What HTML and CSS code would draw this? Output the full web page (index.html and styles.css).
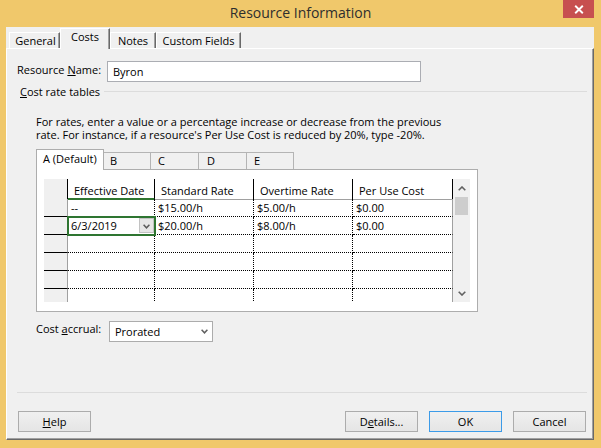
FILE: index.html
```html
<!DOCTYPE html>
<html>
<head>
<meta charset="utf-8">
<title>Resource Information</title>
<link rel="stylesheet" href="styles.css">
</head>
<body>
<div class="window">
  <div class="titlebar">
    <div class="tb-spacer"></div>
    <div class="title">Resource Information</div>
    <div class="caption-btns">
      <div class="close-btn"><svg width="10" height="9" viewBox="0 0 10 9"><path d="M1.2 0.8 L8.8 8.2 M8.8 0.8 L1.2 8.2" stroke="#fff" stroke-width="1.9" fill="none"/></svg></div>
    </div>
  </div>
  <div class="client">
    <div class="tabstrip">
      <div class="tab tab-general">General</div>
      <div class="tab tab-costs active">Costs</div>
      <div class="tab tab-notes">Notes</div>
      <div class="tab tab-custom">Custom Fields</div>
    </div>
    <div class="page">
      <div class="name-row">
        <div class="name-lbl">Resource <u>N</u>ame:</div>
        <div class="textbox">Byron</div>
      </div>
      <div class="group-head">
        <span class="group-lbl"><u>C</u>ost rate tables</span>
        <div class="group-rule"></div>
      </div>
      <div class="desc">
        <div class="desc-line">For rates, enter a value or a percentage increase or decrease from the previous</div>
        <div class="desc-line">rate. For instance, if a resource's Per Use Cost is reduced by 20%, type -20%.</div>
      </div>
      <div class="rtabs">
        <div class="rtab rtab-a active">A (Default)</div>
        <div class="rtab rtab-b">B</div>
        <div class="rtab rtab-c">C</div>
        <div class="rtab rtab-d">D</div>
        <div class="rtab rtab-e">E</div>
      </div>
      <div class="rpanel">
        <div class="grid">
          <div class="sheet">
            <div class="row head">
              <div class="hc corner"></div>
              <div class="hc sel-col">Effective Date</div>
              <div class="hc">Standard Rate</div>
              <div class="hc">Overtime Rate</div>
              <div class="hc">Per Use Cost</div>
            </div>
            <div class="row">
              <div class="rh"></div>
              <div class="dc">--</div>
              <div class="dc">$15.00/h</div>
              <div class="dc">$5.00/h</div>
              <div class="dc last">$0.00</div>
            </div>
            <div class="row">
              <div class="rh"></div>
              <div class="dc active-cell"><span>6/3/2019</span><span class="cell-drop"><svg width="7" height="5" viewBox="0 0 7 5"><polyline points="0.6,0.8 3.5,3.8 6.4,0.8" fill="none" stroke="#5a5a5a" stroke-width="1.5"/></svg></span></div>
              <div class="dc">$20.00/h</div>
              <div class="dc">$8.00/h</div>
              <div class="dc last">$0.00</div>
            </div>
            <div class="row">
              <div class="rh"></div><div class="dc"></div><div class="dc"></div><div class="dc"></div><div class="dc last"></div>
            </div>
            <div class="row">
              <div class="rh"></div><div class="dc"></div><div class="dc"></div><div class="dc"></div><div class="dc last"></div>
            </div>
            <div class="row">
              <div class="rh"></div><div class="dc"></div><div class="dc"></div><div class="dc"></div><div class="dc last"></div>
            </div>
            <div class="row">
              <div class="rh"></div><div class="dc"></div><div class="dc"></div><div class="dc"></div><div class="dc last"></div>
            </div>
          </div>
          <div class="vscroll">
            <div class="sb-btn sb-up"><svg width="8" height="5" viewBox="0 0 8 5"><polyline points="0.7,4.2 4,1 7.3,4.2" fill="none" stroke="#606060" stroke-width="1.6"/></svg></div>
            <div class="sb-thumb"></div>
            <div class="sb-track"></div>
            <div class="sb-btn"><svg width="8" height="5" viewBox="0 0 8 5"><polyline points="0.7,0.8 4,4 7.3,0.8" fill="none" stroke="#606060" stroke-width="1.6"/></svg></div>
          </div>
        </div>
      </div>
      <div class="accrual-row">
        <div class="accrual-lbl">Cost <u>a</u>ccrual:</div>
        <div class="select"><span>Prorated</span><svg width="7" height="5" viewBox="0 0 7 5"><polyline points="0.6,0.8 3.5,3.8 6.4,0.8" fill="none" stroke="#606060" stroke-width="1.5"/></svg></div>
      </div>
      <div class="footer-sep"></div>
      <div class="footer">
        <div class="btn"><u>H</u>elp</div>
        <div class="footer-right">
          <div class="btn">D<u>e</u>tails...</div>
          <div class="btn default">OK</div>
          <div class="btn">Cancel</div>
        </div>
      </div>
    </div>
  </div>
</div>
</body>
</html>
```
FILE: styles.css
```css
html, body {
  margin: 0;
  padding: 0;
}
body {
  font-family: "Segoe UI", "Open Sans", "Noto Sans", sans-serif;
  font-size: 11px;
  color: #000;
  background: #f0c86b;
}
u { text-decoration: underline; text-underline-offset: 1px; }

.window {
  width: 601px;
  height: 448px;
  background: #f0c86b;
  display: flex;
  flex-direction: column;
}

/* title bar */
.titlebar {
  height: 27px;
  display: grid;
  grid-template-columns: 1fr auto 1fr;
  align-items: start;
}
.title {
  font-size: 14px;
  line-height: 26px;
  color: #2e2e2e;
}
.caption-btns {
  display: flex;
  justify-content: flex-end;
  padding-right: 7px;
}
.close-btn {
  width: 31px;
  height: 18px;
  background: #c75050;
  display: flex;
  align-items: center;
  justify-content: center;
}

/* client */
.client {
  flex: 1;
  margin: 0 7px 8px 6px;
  background: #f0f0f0;
  display: flex;
  flex-direction: column;
  min-height: 0;
}
.tabstrip {
  height: 21px;
  display: flex;
  align-items: flex-end;
  padding-left: 3px;
}
.tab {
  box-sizing: border-box;
  height: 16px;
  border-top: 1px solid #fff;
  border-left: 1px solid #fff;
  border-right: 1px solid #696969;
  box-shadow: inset -1px 0 0 #a0a0a0;
  line-height: 15px;
  text-align: center;
  background: #f0f0f0;
  white-space: nowrap;
}
.tab.active {
  height: 21px;
  margin-bottom: -1px;
  padding-bottom: 3px;
  line-height: 16px;
  position: relative;
  z-index: 1;
}
.tab-general { width: 51px; padding-left: 2px; }
.tab-costs { width: 50px; }
.tab-notes { width: 46px; }
.tab-custom { width: 85px; }

.page {
  flex: 1;
  box-sizing: border-box;
  border-top: 1px solid #fff;
  border-left: 1px solid #fff;
  border-right: 1px solid #696969;
  border-bottom: 1px solid #696969;
  box-shadow: inset -1px -1px 0 #a0a0a0;
  padding: 12px 6px 7px 10px;
  display: flex;
  flex-direction: column;
}

.name-row {
  display: flex;
  align-items: flex-start;
  height: 21px;
}
.name-lbl {
  width: 90px;
  line-height: 17px;
  white-space: nowrap;
}
.textbox {
  box-sizing: border-box;
  width: 314px;
  height: 21px;
  border: 1px solid #abadb3;
  background: #fff;
  padding-left: 5px;
  line-height: 19px;
}

.group-head {
  display: flex;
  align-items: center;
  height: 16px;
  margin-top: 2px;
  padding-left: 3px;
}
.group-lbl { line-height: 16px; white-space: nowrap; }
.group-rule {
  flex: 1;
  height: 1px;
  background: #dcdcdc;
  margin-left: 4px;
  margin-bottom: 1px;
}

.desc {
  margin: 16px 0 0 19px;
  display: flex;
  flex-direction: column;
}
.desc-line {
  height: 12.5px;
  line-height: 12.5px;
  white-space: nowrap;
}

.rtabs {
  margin: 8px 0 0 19px;
  height: 20px;
  display: flex;
  align-items: flex-end;
}
.rtab {
  box-sizing: border-box;
  height: 17px;
  border: 1px solid #b4b4b4;
  border-bottom: 0;
  background: #f0f0f0;
  line-height: 16px;
  padding-left: 6px;
  margin-left: -1px;
  white-space: nowrap;
}
.rtab.active {
  height: 21px;
  margin-bottom: -1px;
  margin-left: 0;
  background: #fff;
  border-color: #adadad;
  line-height: 18px;
  padding-bottom: 2px;
  position: relative;
  z-index: 1;
}
.rtab-a { width: 68px; }
.rtab-b { width: 48px; }
.rtab-c { width: 49px; padding-left: 7px; }
.rtab-d { width: 49px; padding-left: 8px; }
.rtab-e { width: 48px; padding-left: 7px; }

.rpanel {
  box-sizing: border-box;
  width: 442px;
  height: 143px;
  margin-left: 19px;
  border: 1px solid #adadad;
  background: #fff;
  padding: 9px 7px 9px 7px;
}
.grid {
  display: flex;
  height: 123px;
  overflow: hidden;
}
.sheet {
  width: 409px;
  overflow: hidden;
}
.row {
  display: grid;
  grid-template-columns: 24px 87px 99px 99px 100px;
  height: 18px;
}
.row.head { height: 20px; }
.row > div { box-sizing: border-box; white-space: nowrap; overflow: visible; }

.hc {
  background: #fff;
  border-right: 1px solid #000;
  border-bottom: 1px solid #a0a0a0;
  padding: 4px 0 0 6px;
  line-height: 15px;
}
.hc.corner {
  background: #f0f0f0;
  border-bottom-color: #000;
}
.hc.sel-col {
  border-bottom: 2px solid #2e7531;
}
.rh {
  background: #f0f0f0;
  border-right: 1px solid #a0a0a0;
  border-bottom: 1px solid #000;
}
.dc {
  border-right: 1px dotted #000;
  border-bottom: 1px dotted #000;
  padding-left: 3px;
  line-height: 17px;
}
.dc.last {
  border-right: 1px solid #a0a0a0;
}
.active-cell {
  display: flex;
  justify-content: space-between;
  align-items: flex-start;
  outline: 2px solid #2e7531;
  outline-offset: -1px;
  position: relative;
  z-index: 1;
}
.cell-drop {
  box-sizing: border-box;
  width: 15px;
  height: 15px;
  margin-top: 1px;
  border: 1px solid #c2c2c2;
  background: #e6e6e6;
  display: flex;
  align-items: center;
  justify-content: center;
  padding-top: 2px;
}

.vscroll {
  width: 17px;
  background: #f0f0f0;
  display: flex;
  flex-direction: column;
  align-items: center;
}
.sb-btn {
  box-sizing: border-box;
  height: 17px;
  width: 17px;
  display: flex;
  align-items: center;
  justify-content: center;
}
.sb-btn.sb-up {
  align-items: flex-start;
  padding-top: 7px;
}
.sb-thumb {
  width: 13px;
  height: 18px;
  margin-top: 1px;
  background: #cdcdcd;
}
.sb-track { flex: 1; }

.accrual-row {
  display: flex;
  align-items: flex-start;
  margin: 9px 0 0 19px;
  height: 21px;
}
.accrual-lbl {
  width: 73px;
  line-height: 15px;
  white-space: nowrap;
}
.select {
  box-sizing: border-box;
  width: 104px;
  height: 21px;
  border: 1px solid #acacac;
  background: #fff;
  padding: 0 4px 0 5px;
  display: flex;
  align-items: center;
  justify-content: space-between;
}

.footer-sep {
  margin-top: auto;
  height: 1px;
  background: #dcdcdc;
}
.footer {
  margin-top: 18px;
  display: flex;
  justify-content: space-between;
  padding: 0 1px;
}
.footer-right {
  display: flex;
  gap: 11px;
}
.btn {
  box-sizing: border-box;
  width: 73px;
  height: 21px;
  border: 1px solid #acacac;
  background: linear-gradient(#f0f0f0, #e5e5e5);
  text-align: center;
  line-height: 19px;
}
.btn.default {
  border-color: #3c9be8;
}
```
